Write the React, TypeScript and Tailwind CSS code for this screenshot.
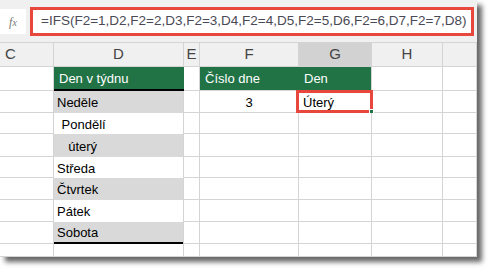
import React from "react";

const font = { fontFamily: '"Liberation Sans", Arial, sans-serif' };

const cols = "grid grid-cols-[54px_130px_16px_99px_73px_71px_34px]";
const cell = "border-r border-b border-[#d4d4d4] bg-white";

const days = [
  { text: "Neděle", grey: true, h: "h-[22px]", pl: "pl-[3px]" },
  { text: " Pondělí", grey: false, h: "h-[21px]", pl: "pl-[4px]" },
  { text: "  úterý", grey: true, h: "h-[23px]", pl: "pl-[7px]" },
  { text: "Středa", grey: false, h: "h-[21px]", pl: "pl-[3px]" },
  { text: "Čtvrtek", grey: true, h: "h-[22px]", pl: "pl-[3px]" },
  { text: "Pátek", grey: false, h: "h-[22px]", pl: "pl-[3px]" },
  { text: "Sobota", grey: true, h: "h-[22px]", pl: "pl-[3px]" },
];

const headers = [
  { label: "C", cls: "justify-start pl-[5px]" },
  { label: "D", cls: "justify-center" },
  { label: "E", cls: "justify-center" },
  { label: "F", cls: "justify-center" },
  { label: "G", cls: "justify-center bg-[#d2d2d2] text-[#2f6b55]" },
  { label: "H", cls: "justify-center" },
  { label: "", cls: "" },
];

export default function App() {
  return (
    <div className="w-[492px] h-[272px] bg-white" style={font}>
      <div className="w-[477px] h-[257px] flex flex-col overflow-hidden bg-white shadow-[5px_5px_5px_rgba(0,0,0,0.6)]">
        {/* Formula bar */}
        <div className="h-[43px] bg-[#f0f0f0] flex items-start pt-[7px] border-b border-[#d4d4d4]">
          <div className="w-[26px] h-[25px] mt-[2px] bg-white flex items-center justify-center">
            <span
              className="text-[12px] text-[#777] italic"
              style={{ fontFamily: '"Liberation Serif", "Times New Roman", serif' }}
            >
              f<span className="text-[10px]">x</span>
            </span>
          </div>
          <div className="ml-[4px] w-[444px] h-[29px] border-[3px] border-[#e8473d] bg-white flex items-center pl-[8px]">
            <span className="text-[13.5px] text-[#4a4a55] whitespace-nowrap">
              =IFS(F2=1,D2,F2=2,D3,F2=3,D4,F2=4,D5,F2=5,D6,F2=6,D7,F2=7,D8)
            </span>
          </div>
        </div>

        {/* Column headers */}
        <div className={`${cols} h-[24px] bg-[#f0f0f0]`}>
          {headers.map((h, i) => (
            <div
              key={i}
              className={`flex items-center border-r border-b border-[#d4d4d4] text-[15px] text-[#444] ${h.cls}`}
            >
              {h.label}
            </div>
          ))}
        </div>

        {/* Row 1: headings */}
        <div className={`${cols} h-[24px] text-[13px] leading-[16px]`}>
          <div className={cell} />
          <div className="bg-[#217346] text-white flex flex-col min-h-0">
            <div className="flex-1 min-h-0 flex items-center pl-[5px] pt-[1px]">Den v týdnu</div>
            <div className="h-[2px] shrink-0 bg-[#000]" />
          </div>
          <div className={cell} />
          <div className="bg-[#217346] text-white flex items-center pl-[5px] pt-[1px] border-b border-[#d4d4d4]">
            Číslo dne
          </div>
          <div className="bg-[#217346] text-white flex items-center pl-[5px] pt-[1px] border-r border-b border-[#d4d4d4]">
            Den
          </div>
          <div className={cell} />
          <div className={cell} />
        </div>

        {/* Data rows */}
        {days.map((d, i) => (
          <div key={i} className={`${cols} ${d.h} text-[13px] leading-[16px] text-black`}>
            <div className={cell} />
            <div
              className={`flex flex-col min-h-0 border-r border-[#d4d4d4] ${
                d.grey ? "bg-[#d9d9d9]" : "bg-white"
              }`}
            >
              <div className={`flex-1 min-h-0 flex items-center pt-[2px] whitespace-pre ${d.pl}`}>
                {d.text}
              </div>
              {i === days.length - 1 && <div className="h-[2px] shrink-0 bg-[#000]" />}
            </div>
            <div className={cell} />
            <div className={`${cell} flex items-center justify-center pt-[2px]`}>
              {i === 0 ? "3" : ""}
            </div>
            <div className={`${cell} relative flex items-center pl-[4px] pt-[2px]`}>
              {i === 0 && (
                <>
                  Úterý
                  <div className="absolute left-[-3px] top-[-1px] w-[77px] h-[23px] border-[3px] border-[#e8473d]" />
                  <div className="absolute right-[-3px] bottom-[-2px] w-[5px] h-[5px] bg-[#217346] border border-white" />
                </>
              )}
            </div>
            <div className={cell} />
            <div className={cell} />
          </div>
        ))}

        {/* Trailing row */}
        <div className={`${cols} flex-1`}>
          {[0, 1, 2, 3, 4, 5, 6].map((i) => (
            <div key={i} className={cell} />
          ))}
        </div>
      </div>
    </div>
  );
}
